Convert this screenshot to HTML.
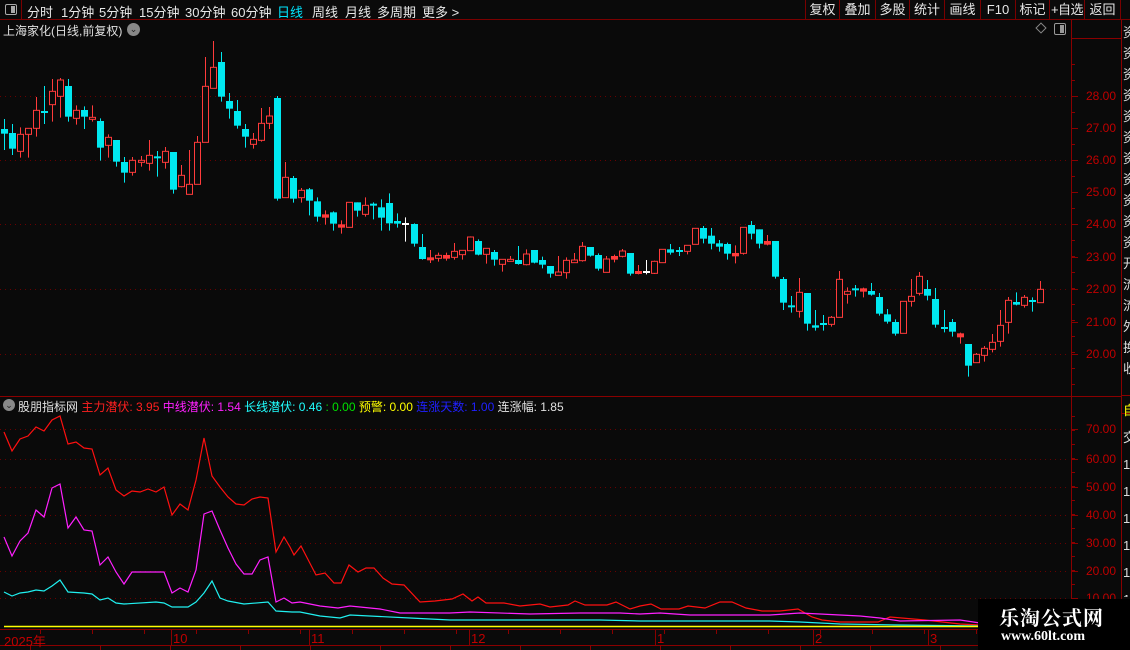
<!DOCTYPE html>
<html><head><meta charset="utf-8">
<style>
*{margin:0;padding:0;box-sizing:border-box}
body{width:1130px;height:650px;background:#0a0a0a;overflow:hidden;position:relative;font-family:"Liberation Sans","Noto Sans CJK SC",sans-serif;color:#ddd}
.tb{position:absolute;left:0;top:0;width:1130px;height:20px;border-bottom:1px solid #7a0000;font-size:13px;color:#e8e8e8}
.tb span{position:absolute;top:2px;white-space:nowrap}
.rb{position:absolute;top:0;height:19px;border-left:1px solid #7a0000;font-size:13px;line-height:19px;text-align:center;color:#e8e8e8;white-space:nowrap}
.lbl{position:absolute;font-size:12px;color:#c00000;white-space:nowrap}
.t{position:absolute;white-space:nowrap;font-size:13px}
svg{position:absolute;left:0;top:0}
</style></head><body>
<svg id="s" width="1130" height="650"></svg>
<div class="tb">
<div style="position:absolute;left:0;top:0;width:22px;height:19px;border-right:1px solid #7a0000"><div style="position:absolute;left:5px;top:4px;width:12px;height:11px;border:1px solid #aaa;border-radius:2px"><div style="position:absolute;right:1px;top:1px;width:4px;height:7px;background:#aaa"></div></div></div>
<span style="left:27px">分时</span><span style="left:61px">1分钟</span><span style="left:99px">5分钟</span><span style="left:139px">15分钟</span><span style="left:185px">30分钟</span><span style="left:231px">60分钟</span><span style="left:277px;color:#00e5ff">日线</span><span style="left:312px">周线</span><span style="left:345px">月线</span><span style="left:377px">多周期</span><span style="left:422px">更多 &gt;</span>
</div>
<div class="rb" style="left:805px;width:34px">复权</div>
<div class="rb" style="left:839px;width:36px">叠加</div>
<div class="rb" style="left:875px;width:34px">多股</div>
<div class="rb" style="left:909px;width:35px">统计</div>
<div class="rb" style="left:944px;width:36px">画线</div>
<div class="rb" style="left:980px;width:35px">F10</div>
<div class="rb" style="left:1015px;width:34px">标记</div>
<div class="rb" style="left:1049px;width:35px;letter-spacing:-0.5px">+自选</div>
<div class="rb" style="left:1084px;width:37px;border-right:1px solid #7a0000">返回</div>
<div class="t" style="left:3px;top:22px;color:#e0e0e0;font-size:12px">上海家化(日线,前复权)</div>
<div style="position:absolute;left:127px;top:23px;width:13px;height:13px;border-radius:50%;background:#888;color:#222;font-size:9px;line-height:13px;text-align:center">⌄</div>
<div style="position:absolute;left:1037px;top:24px;width:8px;height:8px;border:1px solid #888;transform:rotate(45deg)"></div>
<div style="position:absolute;left:1054px;top:23px;width:12px;height:12px;border:1px solid #999;border-radius:2px"><div style="position:absolute;right:1px;top:1px;width:4px;height:8px;background:#999"></div></div>
<div style="position:absolute;left:3px;top:399px;width:12px;height:12px;border-radius:50%;background:#888;color:#222;font-size:9px;line-height:12px;text-align:center">⌄</div>
<div class="t" style="left:18px;top:398px;font-size:12px"><span style="color:#e0e0e0">股朋指标网</span> <span style="color:#ff2020">主力潜伏: 3.95</span> <span style="color:#ff20ff">中线潜伏: 1.54</span> <span style="color:#20ffff">长线潜伏: 0.46</span> <span style="color:#00e000">: 0.00</span> <span style="color:#ffff00">预警: 0.00</span> <span style="color:#2020ff">连涨天数: 1.00</span> <span style="color:#e0e0e0">连涨幅: 1.85</span></div>
<div class="lbl" style="left:1086px;top:89px">28.00</div><div class="lbl" style="left:1086px;top:121px">27.00</div><div class="lbl" style="left:1086px;top:153px">26.00</div><div class="lbl" style="left:1086px;top:185px">25.00</div><div class="lbl" style="left:1086px;top:217px">24.00</div><div class="lbl" style="left:1086px;top:250px">23.00</div><div class="lbl" style="left:1086px;top:282px">22.00</div><div class="lbl" style="left:1086px;top:315px">21.00</div><div class="lbl" style="left:1086px;top:347px">20.00</div>
<div class="lbl" style="left:1086px;top:422px">70.00</div><div class="lbl" style="left:1086px;top:452px">60.00</div><div class="lbl" style="left:1086px;top:480px">50.00</div><div class="lbl" style="left:1086px;top:508px">40.00</div><div class="lbl" style="left:1086px;top:536px">30.00</div><div class="lbl" style="left:1086px;top:564px">20.00</div><div class="lbl" style="left:1086px;top:591px">10.00</div>
<div class="lbl" style="left:4px;top:631px;font-size:13px">2025年</div><div class="lbl" style="left:173px;top:631px;font-size:13px">10</div><div class="lbl" style="left:311px;top:631px;font-size:13px">11</div><div class="lbl" style="left:471px;top:631px;font-size:13px">12</div><div class="lbl" style="left:657px;top:631px;font-size:13px">1</div><div class="lbl" style="left:815px;top:631px;font-size:13px">2</div><div class="lbl" style="left:930px;top:631px;font-size:13px">3</div>
<div style="position:absolute;left:1123px;top:22px;width:7px;height:370px;overflow:hidden;color:#ddd;font-size:13px;line-height:21px;word-break:keep-all">资<br>资<br>资<br>资<br>资<br>资<br>资<br>资<br>资<br>资<br>资<br>开<br>流<br>流<br>外<br>换<br>收</div>
<div style="position:absolute;left:1123px;top:397px;width:7px;height:200px;overflow:hidden;color:#ddd;font-size:13px;line-height:27px"><span style="color:#ff0">自</span><br>交<br>1<br>1<br>1<br>1<br>1<br>1<br>1</div>
<div style="position:absolute;left:978px;top:599px;width:152px;height:51px;background:#000"></div>
<div style="position:absolute;left:999px;top:602px;font-family:'Noto Serif CJK SC','Liberation Serif',serif;font-weight:bold;font-size:20px;color:#fff;letter-spacing:1px">乐淘公式网</div>
<div style="position:absolute;left:1001px;top:629px;font-family:'Liberation Serif',serif;font-weight:bold;font-size:14px;color:#fff">www.60lt.com</div>
<script>
var s=document.getElementById('s'),h='';
function L(x1,y1,x2,y2,c,w,d){h+='<line x1="'+x1+'" y1="'+y1+'" x2="'+x2+'" y2="'+y2+'" stroke="'+c+'" stroke-width="'+(w||1)+'"'+(d?' stroke-dasharray="'+d+'"':'')+'/>';}
L(0,396.5,1121,396.5,'#8a0000');L(1071.5,20,1071.5,646,'#8a0000');L(1121.5,20,1121.5,650,'#8a0000');
L(0,629.5,1071,629.5,'#8a0000');L(0,645.5,1121,645.5,'#8a0000');L(1071,38.5,1121,38.5,'#8a0000');
L(1121,395.5,1130,395.5,'#8a0000');L(1121,413.5,1130,413.5,'#8a0000');
[171,309,469,655,813,928].forEach(function(x){L(x+.5,630,x+.5,646,'#8a0000');});
for(var x=40;x<1070;x+=52)L(x+.5,630,x+.5,634,'#8a0000');
for(var x=30;x<1070;x+=70)L(x+.5,646,x+.5,650,'#8a0000');
[96,160,224,289,354].forEach(function(y){L(0,y+.5,1070,y+.5,'#6a0000',1,'1 4');});
[429,459,487,515,543,571,598].forEach(function(y){L(0,y+.5,1070,y+.5,'#6a0000',1,'1 4');});
[96,128,160,192,224,257,289,322,354].forEach(function(y){L(1071,y+.5,1078,y+.5,'#8a0000');});
for(var y=64;y<395;y+=16)L(1071,y+.5,1075,y+.5,'#8a0000');
[429,459,487,515,543,571,598].forEach(function(y){L(1071,y+.5,1078,y+.5,'#8a0000');});
for(var y=416;y<628;y+=14)L(1071,y+.5,1075,y+.5,'#8a0000');
var A=[[297,311,267,360,'c'],[309,356,282,375,'c'],[313,364,292,383,'r'],[295,313,295,383,'r'],[241,295,201,320,'r'],[246,246,168,282,'x'],[184,224,147,275,'r'],[150,199,144,263,'r'],[168,260,147,275,'c'],[241,265,226,284,'r'],[240,260,229,297,'c'],[262,268,226,275,'r'],[273,353,265,392,'c'],[322,346,313,383,'r'],[330,395,330,410,'c'],[396,428,381,458,'c'],[391,427,381,437,'r'],[391,397,378,410,'r'],[376,400,330,422,'r'],[382,382,363,440,'x'],[364,397,351,416,'r'],[366,479,366,491,'c'],[436,470,405,472,'r'],[463,493,360,493,'r'],[337,463,318,463,'r'],[169,337,81,337,'r'],[112,175,33,175,'r'],[96,200,66,215,'c'],[213,236,189,266,'c'],[243,287,210,296,'c'],[297,320,282,353,'c'],[328,343,309,356,'r'],[280,331,234,335,'r'],[258,280,231,297,'r'],[204,506,198,512,'c'],[442,503,396,503,'r'],[444,506,438,518,'c'],[481,503,474,518,'r'],[478,512,474,556,'c'],[514,560,502,575,'c'],[556,560,541,584,'R'],[547,581,544,602,'c'],[586,590,571,611,'R'],[517,592,517,592,'r'],[517,542,517,560,'c'],[526,553,502,560,'r'],[524,524,517,568,'x'],[532,563,508,602,'c'],[519,580,490,602,'c'],[573,581,550,593,'c'],[582,582,562,635,'w']];
var B=[[72,131,70,140,'c'],[141,177,102,179,'c'],[175,178,150,189,'R'],[166,175,158,185,'r'],[168,173,158,182,'R'],[154,172,129,179,'r'],[151,164,151,179,'r'],[111,152,109,152,'r'],[123,164,118,166,'c'],[145,163,145,191,'r'],[156,179,150,197,'c'],[178,193,178,215,'r'],[178,184,168,185,'r'],[180,192,138,194,'c'],[162,194,148,196,'r'],[150,188,150,190,'c'],[180,194,170,205,'c'],[198,221,198,233,'c'],[216,226,168,226,'r'],[181,218,172,236,'r'],[180,188,159,188,'r'],[139,182,126,185,'r'],[141,167,141,170,'c'],[165,206,160,212,'c'],[177,217,168,217,'r'],[171,176,164,187,'R'],[153,169,147,172,'r'],[159,221,159,227,'c'],[216,219,195,223,'R'],[216,216,180,223,'w'],[184,220,182,222,'r'],[148,188,148,188,'r'],[148,158,132,164,'c'],[150,155,141,168,'c'],[136,154,136,163,'r'],[85,133,85,133,'r'],[84,116,78,130,'c'],[107,131,84,148,'c'],[130,140,120,155,'c'],[132,161,128,179,'c'],[162,166,136,190,'R'],[82,160,82,164,'r'],[75,101,63,118,'c'],[88,131,88,145,'c'],[126,131,105,136,'R'],[123,230,123,236,'c'],[237,308,231,330,'c'],[316,320,288,338,'c'],[277,334,234,353,'r'],[279,371,279,392,'c'],[376,383,330,392,'c'],[369,374,345,392,'c'],[352,373,348,380,'r'],[238,352,213,352,'r'],[274,283,262,311,'r'],[268,268,255,290,'x'],[268,272,263,292,'R'],[273,284,249,287,'c'],[291,341,279,347,'c'],[343,365,327,371,'c'],[366,401,358,407,'c'],[304,400,304,400,'r'],[289,304,237,320,'r'],[229,280,216,286,'r'],[267,287,240,301,'c'],[297,374,264,383,'c'],[384,384,330,397,'x'],[366,395,357,410,'c'],[403,409,398,431,'R'],[432,497,432,530,'c'],[463,488,459,488,'r'],[445,466,438,485,'r'],[427,448,402,457,'r'],[376,424,330,440,'r'],[301,367,291,401,'r'],[306,314,277,316,'c'],[292,316,285,323,'r'],[303,303,292,335,'x'],[268,308,243,308,'r']];
var C=A.map(function(a){return [30+a[0]/3,30+a[1]/3,30+a[2]/3,30+a[3]/3,a[4]];}).concat(B.map(function(a){return [200+a[0]/3,200+a[1]/3,200+a[2]/3,200+a[3]/3,a[4]];}));
var RED='#ff3b3b',CY='#00e8f0';
C.forEach(function(c,i){var x=Math.round(4+8.03*i);var t=c[4];
 var col=(t=='r'||t=='R')?RED:(t=='w'?'#fff':CY);
 if(t=='r'){L(x+.5,c[2],x+.5,c[0],col);L(x+.5,c[1],x+.5,c[3],col);h+='<rect x="'+(x-2.5)+'" y="'+c[0]+'" width="6" height="'+Math.max(1,c[1]-c[0])+'" fill="#0a0a0a" stroke="'+col+'"/>';}
 else if(t=='c'){L(x+.5,c[2],x+.5,c[3],col);h+='<rect x="'+(x-3)+'" y="'+c[0]+'" width="7" height="'+Math.max(2,c[1]-c[0])+'" fill="'+col+'"/>';}
 else {L(x+.5,c[2],x+.5,c[3],col);h+='<rect x="'+(x-3)+'" y="'+(c[0]-1)+'" width="7" height="'+Math.max(2,c[1]-c[0]+2)+'" fill="'+col+'"/>';}
});
function P(pts,c){h+='<polyline fill="none" stroke="'+c+'" stroke-width="1.2" points="'+pts.map(function(p){return p.join(',');}).join(' ')+'"/>';}
P([[4,432],[12,451],[20,439],[28,436],[36,427],[44,431],[52,420],[60,416],[68,444],[76,442],[84,448],[92,449],[100,475],[108,468],[116,490],[124,496],[132,491],[140,492],[148,489],[156,492],[164,487],[172,515],[180,504],[188,510],[196,480],[204,438],[212,476],[220,487],[228,497],[236,504],[244,505],[252,499],[260,497],[268,498],[276,552],[284,537],[290,547],[294,555],[301,546],[316,575],[325,573],[334,583],[341,583],[349,565],[358,572],[366,568],[374,568],[383,578],[392,584],[404,585],[420,602],[435,601],[452,599],[463,594],[472,601],[478,597],[486,603],[504,603],[520,606],[540,604],[550,607],[568,605],[575,601],[585,605],[607,605],[616,602],[630,609],[640,606],[651,604],[661,609],[679,609],[688,606],[705,608],[720,602],[732,602],[746,608],[762,611],[780,611],[798,609],[812,617],[822,620],[840,622],[878,622],[890,617],[925,620],[960,624],[980,625]],'#ff1010');
P([[4,537],[12,556],[20,541],[28,533],[36,510],[44,517],[52,488],[60,484],[68,528],[76,517],[84,530],[92,531],[100,565],[108,557],[116,572],[124,584],[132,572],[164,572],[172,593],[180,588],[188,592],[196,570],[204,514],[212,511],[220,530],[228,548],[236,564],[244,574],[252,574],[260,560],[268,557],[276,602],[284,598],[292,603],[300,602],[320,606],[338,608],[350,606],[380,609],[400,613],[450,613],[470,612],[530,614],[580,613],[620,613],[640,614],[660,613],[690,615],[770,615],[800,613],[860,616],[880,618],[900,621],[960,620],[980,623]],'#ff20ff');
P([[4,592],[12,596],[20,593],[28,592],[36,590],[44,591],[52,586],[60,580],[68,592],[84,593],[92,594],[100,600],[108,598],[116,603],[124,604],[156,602],[164,603],[172,607],[188,607],[196,602],[204,593],[212,581],[220,598],[228,601],[244,604],[268,602],[276,611],[292,612],[300,612],[320,616],[340,618],[350,615],[410,618],[450,620],[520,620],[600,620],[640,621],[700,621],[770,621],[800,622],[840,624],[900,625],[980,626]],'#20f0f0');
L(4,626.5,980,626.5,'#ffff00',1.5);
s.innerHTML=h;
</script>
</body></html>
